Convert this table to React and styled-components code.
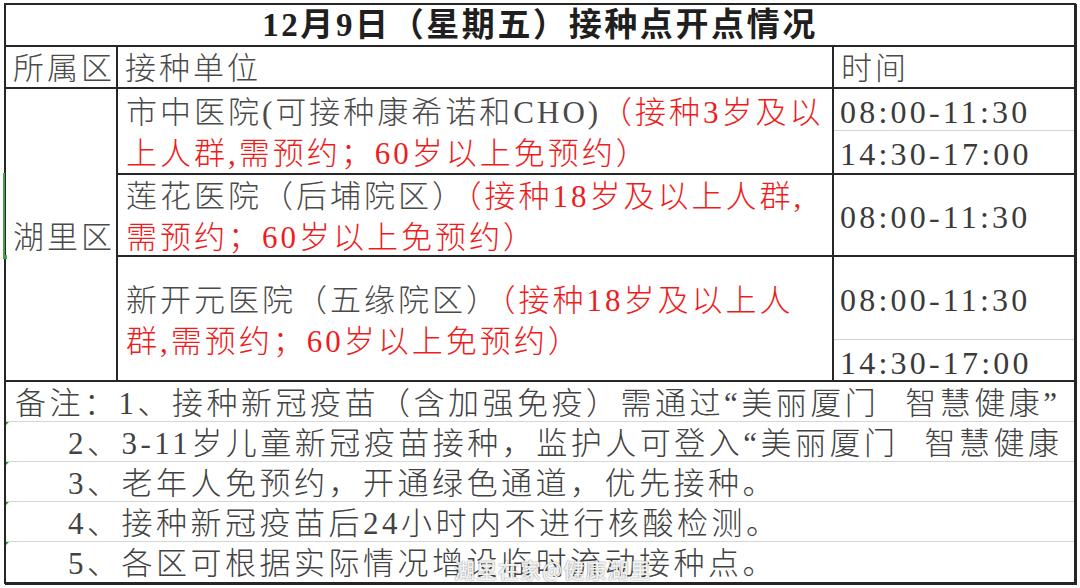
import React from "react";
import styled, { createGlobalStyle } from "styled-components";

// --- Global ---
const GlobalStyle = createGlobalStyle`
  html, body {
    margin: 0;
    padding: 0;
    background: #ffffff;
  }
  body {
    width: 1080px;
    height: 588px;
    overflow: hidden;
  }
`;

// --- Styled Components ---
const Page = styled.div`
  position: relative;
  width: 1080px;
  height: 588px;
  padding: 3px 0 0 4px;
  box-sizing: border-box;
  font-family: "Liberation Serif", "Noto Sans CJK SC", serif;
  color: #424242;
`;

const Sheet = styled.div`
  display: grid;
  grid-template-columns: 110px 714px 240px;
  grid-template-rows: 40px 40px 84px 80px 123px 200px;
  gap: 2px;
  padding: 2px;
  width: 1072px;
  box-sizing: border-box;
  background: #262626;
  box-shadow: 1px 1px 0 #262626;
`;

const Cell = styled.div`
  position: relative;
  background: #ffffff;
  display: flex;
  align-items: center;
  min-width: 0;
  overflow: hidden;
  white-space: nowrap;
  font-size: 31px;
  font-weight: 300;
  line-height: 1.15;
  letter-spacing: 3px;
`;

const TitleCell = styled(Cell)`
  grid-column: 1 / -1;
  justify-content: center;
  font-size: 33px;
  font-weight: 700;
  letter-spacing: 2.6px;
  color: #1f1f1f;
  padding-top: 1px;
`;

const HeadCell = styled(Cell)`
  padding: 4px 0 0 7px;
  color: #4a4a4a;
`;

const DistrictCell = styled(Cell)`
  grid-row: 3 / 6;
  padding: 6px 0 0 7px;
  color: #4a4a4a;
  overflow: visible;

  &::before {
    content: "";
    position: absolute;
    left: -3px;
    top: 84px;
    width: 2px;
    height: 84px;
    background: #47a047;
  }
  &::after {
    content: "";
    position: absolute;
    left: -3px;
    top: 166px;
    width: 4px;
    height: 4px;
    background: #47a047;
  }
`;

const UnitCell = styled(Cell)`
  flex-direction: column;
  align-items: flex-start;
  justify-content: center;
  padding: ${({ $pad }) => $pad || "4px 0 0 8px"};
  line-height: 41px;
  color: #4a4a4a;
`;

const Line = styled.div`
  white-space: nowrap;
`;

const Red = styled.span`
  color: #ee1c1c;
`;

const TimeCell = styled(Cell)`
  flex-direction: column;
  align-items: stretch;
`;

const TimeSlot = styled.div`
  display: flex;
  align-items: center;
  height: ${({ $h }) => ($h ? `${$h}px` : "auto")};
  flex: ${({ $h }) => ($h ? "none" : "1")};
  padding: 5px 0 0 6px;
  box-sizing: border-box;
  border-bottom: ${({ $last }) => ($last ? "none" : "1px solid #d4d4d4")};
  font-size: 32px;
  letter-spacing: 3.2px;
  color: #3a3a3a;
`;

const NotesCell = styled(Cell)`
  grid-column: 1 / -1;
  flex-direction: column;
  align-items: stretch;
  overflow: visible;
`;

const NoteLine = styled.div`
  position: relative;
  height: 40px;
  display: flex;
  align-items: center;
  padding: 4px 0 0 ${({ $indent }) => ($indent ? "62px" : "9px")};
  box-sizing: border-box;
  border-bottom: ${({ $last }) => ($last ? "none" : "1px solid #d6d6d6")};
  overflow: hidden;
  white-space: nowrap;
  letter-spacing: 3.5px;
  color: #424242;

  &::before {
    content: "";
    display: ${({ $marker }) => ($marker ? "block" : "none")};
    position: absolute;
    left: -2px;
    top: 0;
    width: 0;
    height: 0;
    border-top: 5px solid #2e9a2e;
    border-right: 5px solid transparent;
  }
`;

const Gap = styled.span`
  display: inline-block;
  width: 26px;
`;

const Watermark = styled.div`
  position: absolute;
  left: 454px;
  top: 557px;
  font-family: "Noto Sans CJK SC", sans-serif;
  font-size: 21px;
  font-weight: 500;
  line-height: 1.2;
  letter-spacing: 1px;
  color: rgba(255, 255, 255, 0.92);
  text-shadow: 0 0 2px rgba(0, 0, 0, 0.35), 0 0 1px rgba(0, 0, 0, 0.3);
  white-space: nowrap;
`;

// --- Data ---
const notes = [
  ["2、3-11岁儿童新冠疫苗接种，监护人可登入“美丽厦门", "智慧健康"],
  ["3、老年人免预约，开通绿色通道，优先接种。"],
  ["4、接种新冠疫苗后24小时内不进行核酸检测。"],
  ["5、各区可根据实际情况增设临时流动接种点。"],
];

// --- Component Logic ---
const App = () => {
  return (
    <Page>
      <GlobalStyle />
      <Sheet>
        <TitleCell>12月9日（星期五）接种点开点情况</TitleCell>

        <HeadCell>所属区</HeadCell>
        <HeadCell>接种单位</HeadCell>
        <HeadCell>时间</HeadCell>

        <DistrictCell>湖里区</DistrictCell>

        <UnitCell>
          <Line>
            市中医院(可接种康希诺和CHO)<Red>（接种3岁及以</Red>
          </Line>
          <Line>
            <Red>上人群,需预约；60岁以上免预约）</Red>
          </Line>
        </UnitCell>
        <TimeCell>
          <TimeSlot $h={42}>08:00-11:30</TimeSlot>
          <TimeSlot $last>14:30-17:00</TimeSlot>
        </TimeCell>

        <UnitCell>
          <Line>
            莲花医院（后埔院区）<Red>（接种18岁及以上人群,</Red>
          </Line>
          <Line>
            <Red>需预约；60岁以上免预约）</Red>
          </Line>
        </UnitCell>
        <TimeCell>
          <TimeSlot $last>08:00-11:30</TimeSlot>
        </TimeCell>

        <UnitCell $pad="5px 0 0 8px">
          <Line>
            新开元医院（五缘院区）<Red>（接种18岁及以上人</Red>
          </Line>
          <Line>
            <Red>群,需预约；60岁以上免预约）</Red>
          </Line>
        </UnitCell>
        <TimeCell>
          <TimeSlot $h={83}>08:00-11:30</TimeSlot>
          <TimeSlot $last>14:30-17:00</TimeSlot>
        </TimeCell>

        <NotesCell>
          <NoteLine>
            备注：1、接种新冠疫苗（含加强免疫）需通过“美丽厦门<Gap />智慧健康”
          </NoteLine>
          {notes.map(([head, tail], i) => (
            <NoteLine key={i} $indent $marker $last={i === notes.length - 1}>
              {head}
              {tail && (
                <>
                  <Gap />
                  {tail}
                </>
              )}
            </NoteLine>
          ))}
        </NotesCell>
      </Sheet>
      <Watermark>湖里在家@健康湖里</Watermark>
    </Page>
  );
};

export default App;
